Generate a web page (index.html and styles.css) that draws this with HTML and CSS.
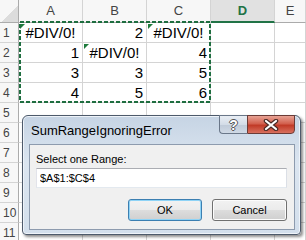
FILE: index.html
```html
<!DOCTYPE html>
<html lang="en">
<head>
    <meta charset="UTF-8">
    <title>SumRangeIgnoringError</title>
    <link rel="stylesheet" href="styles.css">
</head>
<body>
    <div class="screen">
        <div class="sheet">
            <div class="hd corner"></div>
            <div class="hd col">A</div>
            <div class="hd col">B</div>
            <div class="hd col">C</div>
            <div class="hd col active">D</div>
            <div class="hd col">E</div>

            <div class="hd row">1</div>
            <div class="cell err flag">#DIV/0!</div>
            <div class="cell num">2</div>
            <div class="cell err flag">#DIV/0!</div>
            <div class="cell"></div>
            <div class="cell"></div>

            <div class="hd row">2</div>
            <div class="cell num">1</div>
            <div class="cell err flag">#DIV/0!</div>
            <div class="cell num">4</div>
            <div class="cell"></div>
            <div class="cell"></div>

            <div class="hd row">3</div>
            <div class="cell num">3</div>
            <div class="cell num">3</div>
            <div class="cell num">5</div>
            <div class="cell"></div>
            <div class="cell"></div>

            <div class="hd row">4</div>
            <div class="cell num">4</div>
            <div class="cell num">5</div>
            <div class="cell num">6</div>
            <div class="cell"></div>
            <div class="cell"></div>

            <div class="hd row">5</div>
            <div class="cell"></div><div class="cell"></div><div class="cell"></div><div class="cell"></div><div class="cell"></div>
            <div class="hd row">6</div>
            <div class="cell"></div><div class="cell"></div><div class="cell"></div><div class="cell"></div><div class="cell"></div>
            <div class="hd row">7</div>
            <div class="cell"></div><div class="cell"></div><div class="cell"></div><div class="cell"></div><div class="cell"></div>
            <div class="hd row">8</div>
            <div class="cell"></div><div class="cell"></div><div class="cell"></div><div class="cell"></div><div class="cell"></div>
            <div class="hd row">9</div>
            <div class="cell"></div><div class="cell"></div><div class="cell"></div><div class="cell"></div><div class="cell"></div>
            <div class="hd row">10</div>
            <div class="cell"></div><div class="cell"></div><div class="cell"></div><div class="cell"></div><div class="cell"></div>
            <div class="hd row">11</div>
            <div class="cell"></div><div class="cell"></div><div class="cell"></div><div class="cell"></div><div class="cell"></div>
        </div>

        <!-- marching ants around A1:C4 -->
        <svg class="ants" width="194" height="84" viewBox="0 0 194 84">
            <rect x="1" y="1" width="190" height="80" fill="none" stroke="#1f6e40" stroke-width="2" stroke-dasharray="4 2"/>
        </svg>

        <div class="dialog">
            <div class="titlebar">SumRangeIgnoringError</div>
            <div class="caption-btns">
                <div class="cap-btn help"><span>?</span></div>
                <div class="cap-btn close">
                    <svg width="16" height="12" viewBox="0 0 16 12">
                        <path d="M3 2 L13 10 M13 2 L3 10" stroke="#4a2a26" stroke-width="4.5" stroke-linecap="round"/>
                        <path d="M3 2 L13 10 M13 2 L3 10" stroke="#fff" stroke-width="2.2" stroke-linecap="round"/>
                    </svg>
                </div>
            </div>
            <div class="client">
                <label class="prompt" for="range">Select one Range:</label>
                <input class="range-input" id="range" type="text" value="$A$1:$C$4">
                <div class="actions">
                    <button class="btn default">OK</button>
                    <button class="btn">Cancel</button>
                </div>
            </div>
        </div>
    </div>
</body>
</html>
```

FILE: styles.css
```css
body {
    margin: 0;
    background: #fff;
    font-family: "Liberation Sans", Arial, sans-serif;
}
.screen {
    position: relative;
    width: 306px;
    height: 240px;
    overflow: hidden;
}
.sheet {
    display: grid;
    grid-template-columns: 19px 64px 64px 64px 64px 1fr;
    grid-template-rows: 23px repeat(11, 20px);
}
.hd {
    background: #f7f7f7;
    color: #444;
    box-sizing: border-box;
    border-right: 1px solid #d4d4d4;
    border-bottom: 1px solid #d4d4d4;
}
.corner {
    border-right-color: #ababab;
    border-bottom-color: #ababab;
    background: linear-gradient(135deg, #f7f7f7 58%, #dcdcdc 58%);
}
.col {
    font-size: 13px;
    line-height: 22px;
    text-align: center;
    border-bottom-color: #ababab;
}
.col.active {
    background: #e1e1e1;
    color: #217346;
    font-weight: bold;
    border-bottom: 2px solid #217346;
    line-height: 21px;
}
.row {
    font-size: 12px;
    line-height: 20px;
    padding-left: 3px;
    border-right-color: #ababab;
}
.cell {
    position: relative;
    box-sizing: border-box;
    border-right: 1px solid #d4d4d4;
    border-bottom: 1px solid #d4d4d4;
    font-size: 15px;
    line-height: 19px;
    color: #000;
    white-space: nowrap;
}
.num {
    text-align: right;
    padding-right: 3px;
}
.err {
    text-align: center;
}
.flag::before {
    content: "";
    position: absolute;
    left: 1px;
    top: 1px;
    border-top: 5px solid #1e7b3c;
    border-right: 5px solid transparent;
}
.ants {
    position: absolute;
    left: 19px;
    top: 21px;
}
.dialog {
    position: absolute;
    left: 22px;
    top: 115px;
    width: 279px;
    height: 120px;
    box-sizing: border-box;
    border: 1px solid #4d5a6b;
    border-radius: 6px 6px 4px 4px;
    background: linear-gradient(#c6d4e4, #dbe5f0 40%, #d3dfec);
    box-shadow: 2px 2px 3px rgba(0, 0, 0, 0.45), inset 0 0 0 1px #eef3f9;
    display: flex;
    flex-direction: column;
}
.titlebar {
    height: 28px;
    box-sizing: border-box;
    padding: 7px 0 0 8px;
    font-size: 13px;
    line-height: 16px;
    color: #000;
}
.caption-btns {
    position: absolute;
    top: -1px;
    right: 5px;
    display: flex;
}
.cap-btn {
    height: 19px;
    box-sizing: border-box;
    display: flex;
    align-items: center;
    justify-content: center;
}
.help {
    width: 28px;
    border: 1px solid #6a7789;
    border-right: none;
    border-radius: 0 0 0 4px;
    background: linear-gradient(#e9eef4, #d3dce7 50%, #bfcad8 51%, #cfd9e5);
}
.help span {
    font-size: 14px;
    font-weight: bold;
    color: #fff;
    text-shadow: 1px 0 #555, -1px 0 #555, 0 1px #555, 0 -1px #555;
}
.close {
    width: 48px;
    border: 1px solid #6b3b36;
    border-radius: 0 0 4px 0;
    background: linear-gradient(#e8a395, #d2604e 45%, #c13a27 55%, #d8705e);
}
.client {
    flex: 1;
    margin: 0 5px 4px 6px;
    border: 1px solid #8d9bae;
    background: #f0f0f0;
    padding: 7px 7px 0 6px;
    display: flex;
    flex-direction: column;
    font-size: 11px;
}
.prompt {
    line-height: 14px;
    color: #000;
}
.range-input {
    margin-top: 2px;
    height: 20px;
    box-sizing: border-box;
    border: 1px solid #abadb3;
    border-color: #abadb3 #dbdfe6 #e3e9ef #e2e3ea;
    background: #fff;
    padding: 0 3px;
    font-family: "Liberation Sans", Arial, sans-serif;
    font-size: 11px;
    color: #000;
}
.actions {
    margin-top: 11px;
    display: flex;
    justify-content: flex-end;
    gap: 10px;
}
.btn {
    width: 75px;
    height: 22px;
    box-sizing: border-box;
    border: 1px solid #707070;
    border-radius: 3px;
    background: linear-gradient(#f2f2f2, #ebebeb 50%, #dddddd 51%, #cfcfcf);
    box-shadow: inset 0 0 0 1px #fcfcfc;
    font-family: "Liberation Sans", Arial, sans-serif;
    font-size: 11px;
    color: #000;
    padding: 0;
}
.btn.default {
    width: 74px;
    border-color: #3c7fb1;
    box-shadow: inset 0 0 0 1px #8ed3f6;
}
```
